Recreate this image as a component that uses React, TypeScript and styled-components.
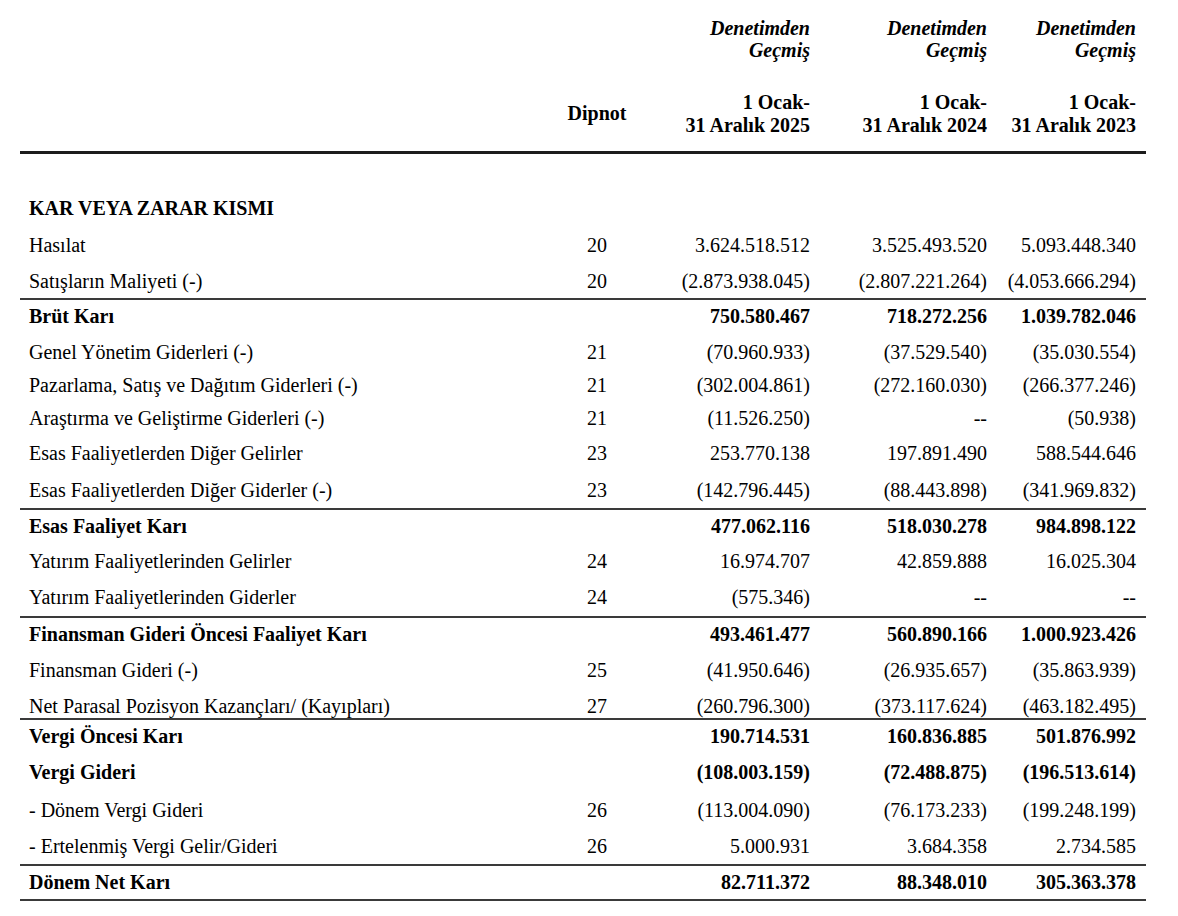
import React from "react";
import styled, { createGlobalStyle } from "styled-components";

const GlobalStyle = createGlobalStyle`
	html,
	body {
		margin: 0;
		padding: 0;
		background: #ffffff;
	}
	body {
		font-family: "Liberation Serif", "Times New Roman", serif;
		color: #000000;
	}
`;

const COLUMNS = "540px 74px 176px 177px 149px";

const Page = styled.div`
	width: 1126px;
	padding: 0 32px 0 20px;
	font-size: 20px;
`;

const HeaderGrid = styled.div`
	display: grid;
	grid-template-columns: ${COLUMNS};
	padding: 17px 10px 15px 0;
	border-bottom: 3px solid #1c1c1c;
`;

const PeriodCell = styled.div`
	display: flex;
	flex-direction: column;
	gap: 30px;
	text-align: right;
`;

const AuditNote = styled.div`
	font-weight: 700;
	font-style: italic;
	line-height: 22px;
`;

const PeriodRange = styled.div`
	font-weight: 700;
	line-height: 22.5px;
`;

const NoteHead = styled.div`
	align-self: end;
	text-align: center;
	font-weight: 700;
	line-height: 20px;
	padding-bottom: 13px;
`;

const Body = styled.div`
	margin-top: 36px;
`;

const Row = styled.div<{ $h: number; $ruled?: boolean; $last?: boolean; $bold?: boolean }>`
	display: grid;
	grid-template-columns: ${COLUMNS};
	box-sizing: border-box;
	height: ${(p) => p.$h}px;
	padding: ${(p) => (p.$ruled ? 6 : 8)}px 10px 0 0;
	line-height: 20px;
	font-weight: ${(p) => (p.$bold ? 700 : 400)};
	border-top: ${(p) => (p.$ruled ? "2px solid #3a3a3a" : "none")};
	border-bottom: ${(p) => (p.$last ? "2px solid #3a3a3a" : "none")};
	white-space: nowrap;
`;

const Label = styled.div`
	padding-left: 9px;
`;

const Note = styled.div`
	text-align: center;
`;

const Amount = styled.div`
	text-align: right;
`;

type Line = {
	label: string;
	note?: string;
	values?: [string, string, string];
	h: number;
	bold?: boolean;
	ruled?: boolean;
	last?: boolean;
};

const lines: Line[] = [
	{ label: "KAR VEYA ZARAR KISMI", h: 37, bold: true },
	{ label: "Hasılat", note: "20", values: ["3.624.518.512", "3.525.493.520", "5.093.448.340"], h: 36 },
	{ label: "Satışların Maliyeti (-)", note: "20", values: ["(2.873.938.045)", "(2.807.221.264)", "(4.053.666.294)"], h: 35 },
	{ label: "Brüt Karı", values: ["750.580.467", "718.272.256", "1.039.782.046"], h: 36, bold: true, ruled: true },
	{ label: "Genel Yönetim Giderleri (-)", note: "21", values: ["(70.960.933)", "(37.529.540)", "(35.030.554)"], h: 33 },
	{ label: "Pazarlama, Satış ve Dağıtım Giderleri (-)", note: "21", values: ["(302.004.861)", "(272.160.030)", "(266.377.246)"], h: 33 },
	{ label: "Araştırma ve Geliştirme Giderleri (-)", note: "21", values: ["(11.526.250)", "--", "(50.938)"], h: 35 },
	{ label: "Esas Faaliyetlerden Diğer Gelirler", note: "23", values: ["253.770.138", "197.891.490", "588.544.646"], h: 37 },
	{ label: "Esas Faaliyetlerden Diğer Giderler (-)", note: "23", values: ["(142.796.445)", "(88.443.898)", "(341.969.832)"], h: 36 },
	{ label: "Esas Faaliyet Karı", values: ["477.062.116", "518.030.278", "984.898.122"], h: 35, bold: true, ruled: true },
	{ label: "Yatırım Faaliyetlerinden Gelirler", note: "24", values: ["16.974.707", "42.859.888", "16.025.304"], h: 36 },
	{ label: "Yatırım Faaliyetlerinden Giderler", note: "24", values: ["(575.346)", "--", "--"], h: 37 },
	{ label: "Finansman Gideri Öncesi Faaliyet Karı", values: ["493.461.477", "560.890.166", "1.000.923.426"], h: 36, bold: true, ruled: true },
	{ label: "Finansman Gideri (-)", note: "25", values: ["(41.950.646)", "(26.935.657)", "(35.863.939)"], h: 36 },
	{ label: "Net Parasal Pozisyon Kazançları/ (Kayıpları)", note: "27", values: ["(260.796.300)", "(373.117.624)", "(463.182.495)"], h: 30 },
	{ label: "Vergi Öncesi Karı", values: ["190.714.531", "160.836.885", "501.876.992"], h: 36, bold: true, ruled: true },
	{ label: "Vergi Gideri", values: ["(108.003.159)", "(72.488.875)", "(196.513.614)"], h: 38, bold: true },
	{ label: "- Dönem Vergi Gideri", note: "26", values: ["(113.004.090)", "(76.173.233)", "(199.248.199)"], h: 36 },
	{ label: "- Ertelenmiş Vergi Gelir/Gideri", note: "26", values: ["5.000.931", "3.684.358", "2.734.585"], h: 36 },
	{ label: "Dönem Net Karı", values: ["82.711.372", "88.348.010", "305.363.378"], h: 37, bold: true, ruled: true, last: true },
];

const periods = ["2025", "2024", "2023"];

function IncomeStatement() {
	return (
		<Page>
			<HeaderGrid>
				<div />
				<NoteHead>Dipnot</NoteHead>
				{periods.map((year) => (
					<PeriodCell key={year}>
						<AuditNote>
							Denetimden
							<br />
							Geçmiş
						</AuditNote>
						<PeriodRange>
							1 Ocak-
							<br />
							31 Aralık {year}
						</PeriodRange>
					</PeriodCell>
				))}
			</HeaderGrid>
			<Body>
				{lines.map((line) => (
					<Row key={line.label} $h={line.h} $ruled={line.ruled} $last={line.last} $bold={line.bold}>
						<Label>{line.label}</Label>
						<Note>{line.note}</Note>
						{line.values ? line.values.map((v, i) => <Amount key={i}>{v}</Amount>) : null}
					</Row>
				))}
			</Body>
		</Page>
	);
}

export default function App() {
	return (
		<>
			<GlobalStyle />
			<IncomeStatement />
		</>
	);
}
